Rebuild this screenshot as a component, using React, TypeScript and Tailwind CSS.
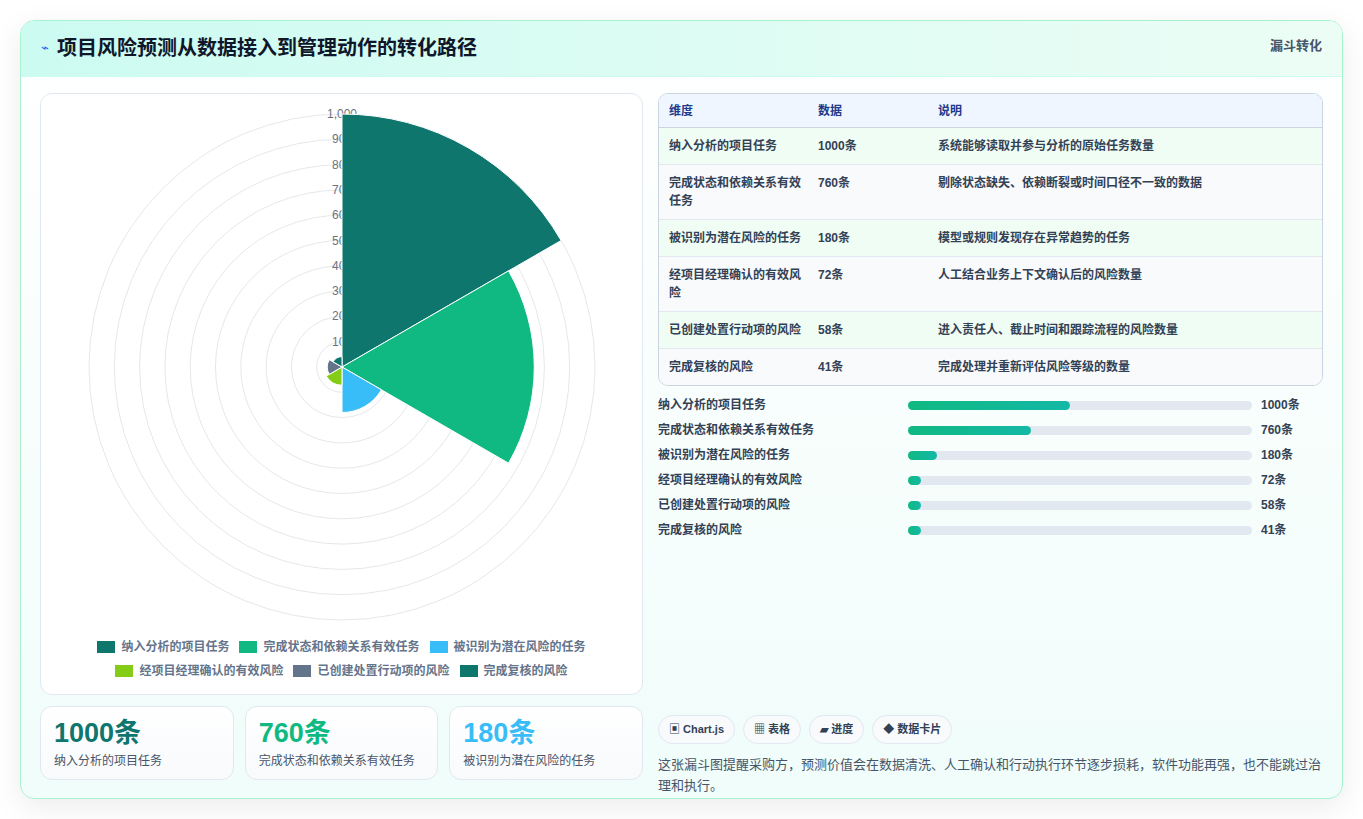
import React from "react";

const rows = [
  ["纳入分析的项目任务", "1000条", "系统能够读取并参与分析的原始任务数量"],
  ["完成状态和依赖关系有效任务", "760条", "剔除状态缺失、依赖断裂或时间口径不一致的数据"],
  ["被识别为潜在风险的任务", "180条", "模型或规则发现存在异常趋势的任务"],
  ["经项目经理确认的有效风险", "72条", "人工结合业务上下文确认后的风险数量"],
  ["已创建处置行动项的风险", "58条", "进入责任人、截止时间和跟踪流程的风险数量"],
  ["完成复核的风险", "41条", "完成处理并重新评估风险等级的数量"],
];
const vals = [1000, 760, 180, 72, 58, 41];
const colors = ["#0f766e", "#10b981", "#38bdf8", "#84cc16", "#64748b", "#0f766e"];
const barW = [162, 123, 29, 13, 13, 13];

function Polar() {
  const cx = 301, cy = 273, R = 253;
  const arc = (v: number, i: number) => {
    const r = (v / 1000) * R;
    const a0 = ((-90 + i * 60) * Math.PI) / 180;
    const a1 = ((-90 + (i + 1) * 60) * Math.PI) / 180;
    return `M${cx},${cy} L${cx + r * Math.cos(a0)},${cy + r * Math.sin(a0)} A${r},${r} 0 0 1 ${cx + r * Math.cos(a1)},${cy + r * Math.sin(a1)} Z`;
  };
  return (
    <svg width="602" height="540" className="block">
      {Array.from({ length: 10 }).map((_, k) => (
        <circle key={k} cx={cx} cy={cy} r={((k + 1) * R) / 10} fill="none" stroke="#e5e7eb" strokeWidth="1" />
      ))}
      {Array.from({ length: 10 }).map((_, k) => {
        const v = (k + 1) * 100;
        return (
          <text key={k} x={cx} y={cy - ((k + 1) * R) / 10 + 4} textAnchor="middle" fontSize="12" fill="#6b7280" fontFamily="Liberation Sans, sans-serif">
            {v === 1000 ? "1,000" : v}
          </text>
        );
      })}
      {vals.map((v, i) => (
        <path key={i} d={arc(v, i)} fill={colors[i]} stroke="#fff" strokeWidth="1" />
      ))}
    </svg>
  );
}

export default function App() {
  const f = { fontFamily: "'Liberation Sans','Noto Sans CJK SC',sans-serif" };
  return (
    <div style={f} className="w-[1363px] h-[819px] bg-white p-[20px] pb-0">
      <div className="h-[779px] rounded-[14px] border border-[#a7f3d0] bg-gradient-to-b from-white to-[#f0fdfa] shadow-[0_8px_30px_rgba(0,0,0,0.08)] overflow-hidden flex flex-col">
        <div className="h-[56px] flex items-start justify-between px-[20px] bg-gradient-to-r from-[#ccfbf1] to-[#ecfdf5] border-b border-[#ccfbf1]">
          <div className="flex items-center gap-[8px] h-[54px]">
            <span className="text-[#2563eb] text-[13px]">⌁</span>
            <span className="text-[20px] font-bold text-[#0f172a]">项目风险预测从数据接入到管理动作的转化路径</span>
          </div>
          <span className="mt-[15px] text-[13px] font-bold text-[#475569]">漏斗转化</span>
        </div>
        <div className="flex gap-[15px] px-[19px] pt-[16px]">
          <div className="w-[603px] flex flex-col gap-[11px]">
            <div className="h-[602px] rounded-[12px] border border-[#e2e8f0] bg-white flex flex-col items-center pt-[0px]">
              <Polar />
              <div className="mt-[4px] flex flex-col items-center gap-[6px] text-[12px] font-bold text-[#64748b]">
                <div className="flex gap-[10px]">
                  {[0, 1, 2].map((i) => (
                    <span key={i} className="flex items-center gap-[6px]"><span className="w-[18px] h-[12px]" style={{ background: colors[i] }} />{rows[i][0]}</span>
                  ))}
                </div>
                <div className="flex gap-[10px]">
                  {[3, 4, 5].map((i) => (
                    <span key={i} className="flex items-center gap-[6px]"><span className="w-[18px] h-[12px]" style={{ background: colors[i] }} />{rows[i][0]}</span>
                  ))}
                </div>
              </div>
            </div>
            <div className="grid grid-cols-3 gap-[11px]">
              {[0, 1, 2].map((i) => (
                <div key={i} className="h-[74px] rounded-[12px] border border-[#e2e8f0] bg-gradient-to-b from-white to-[#f8fafc] px-[13px] pt-[9px]">
                  <div className="text-[27px] font-bold leading-[34px]" style={{ color: ["#0f766e", "#10b981", "#38bdf8"][i] }}>{rows[i][1]}</div>
                  <div className="text-[12px] text-[#475569] mt-[2px]">{rows[i][0]}</div>
                </div>
              ))}
            </div>
          </div>
          <div className="flex-1 flex flex-col">
            <div className="rounded-[10px] border border-[#cbd5e1] overflow-hidden text-[12px] font-bold">
              <div className="flex h-[34px] items-center bg-[#eff6ff] text-[#1e3a8a] border-b border-[#cbd5e1]">
                <div className="w-[159px] pl-[10px]">维度</div>
                <div className="w-[120px]">数据</div>
                <div className="flex-1">说明</div>
              </div>
              {rows.map((r, i) => (
                <div key={i} className={`flex py-[9px] text-[#334155] leading-[18px] ${i % 2 ? "bg-[#f8fafc]" : "bg-[#f0fdf4]"} ${i < 5 ? "border-b border-[#e2e8f0]" : ""}`}>
                  <div className="w-[159px] pl-[10px] pr-[14px]">{r[0]}</div>
                  <div className="w-[120px]">{r[1]}</div>
                  <div className="flex-1">{r[2]}</div>
                </div>
              ))}
            </div>
            <div className="mt-[10px] flex flex-col gap-[7px] text-[12px] font-bold text-[#334155]">
              {rows.map((r, i) => (
                <div key={i} className="flex items-center h-[18px]">
                  <div className="w-[250px]">{r[0]}</div>
                  <div className="w-[344px] h-[9px] rounded-full bg-[#e2e8f0]">
                    <div className="h-[9px] rounded-full bg-gradient-to-r from-[#10b981] to-[#14b8a6]" style={{ width: barW[i] }} />
                  </div>
                  <div className="ml-[9px]">{r[1]}</div>
                </div>
              ))}
            </div>
            <div className="mt-[176px] flex gap-[8px] text-[11px] font-bold text-[#334155]">
              {["▣ Chart.js", "▦ 表格", "▰ 进度", "◆ 数据卡片"].map((c) => (
                <span key={c} className="h-[29px] px-[10px] rounded-full border border-[#e2e8f0] bg-[#f8fafc] flex items-center">{c}</span>
              ))}
            </div>
            <p className="mt-[10px] text-[13px] leading-[21px] text-[#475569]">这张漏斗图提醒采购方，预测价值会在数据清洗、人工确认和行动执行环节逐步损耗，软件功能再强，也不能跳过治理和执行。</p>
          </div>
        </div>
      </div>
    </div>
  );
}
